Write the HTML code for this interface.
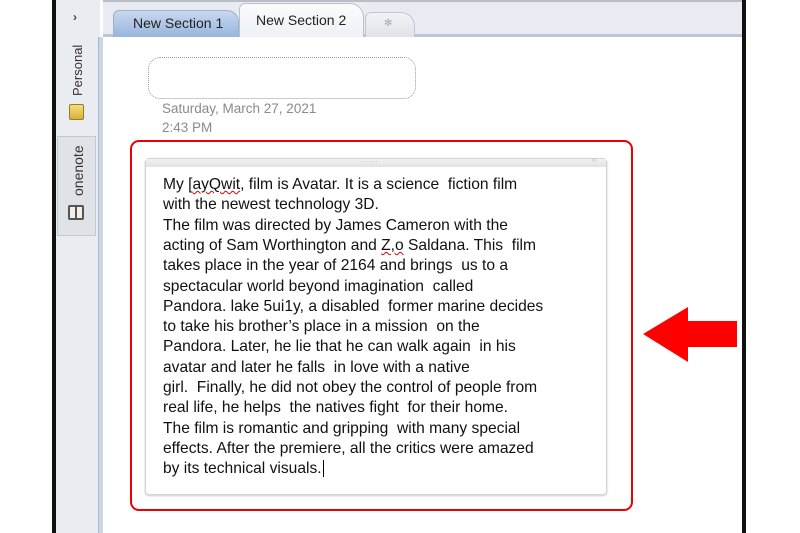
<!DOCTYPE html>
<html><head><meta charset="utf-8">
<style>
*{margin:0;padding:0;box-sizing:border-box}
body{width:800px;height:533px;background:#fff;position:relative;overflow:hidden;font-family:"Liberation Sans",sans-serif}
.abs{position:absolute}
.rot{position:absolute;transform:rotate(-90deg);transform-origin:left top;white-space:nowrap;font-size:13px;color:#333}
.ln{position:absolute;left:163px;font-size:15.6px;color:#111;white-space:nowrap;line-height:20px}
.sq{text-decoration:underline wavy #d00;text-decoration-thickness:1px}
</style></head><body>
<div class="abs" style="left:52px;top:0;width:4px;height:533px;background:#111"></div>
<div class="abs" style="left:742px;top:0;width:4px;height:533px;background:#111"></div>
<div class="abs" style="left:56px;top:0;width:44px;height:533px;background:#e9ecf0"></div>
<div class="abs" style="left:98px;top:37px;width:5px;height:496px;background:#c9d6e4;border-left:1px solid #aab9cc"></div>
<div class="abs" style="left:73px;top:10px;font-size:12px;color:#444;font-weight:bold">›</div>
<div class="rot" style="left:70px;top:96px">Personal</div>
<div class="abs" style="left:69px;top:104px;width:15px;height:16px;background:linear-gradient(#f5de7a,#d8b23a);border:1px solid #9a7b22;border-radius:2px"></div>
<div class="abs" style="left:57px;top:136px;width:39px;height:100px;background:#dfe3e8;border:1px solid #c3c9d1"></div>
<div class="rot" style="left:70px;top:196px;font-size:14px">onenote</div>
<div class="abs" style="left:68px;top:205px;width:16px;height:15px;border:2px solid #555;border-radius:2px;background:#f3efe4"></div>
<div class="abs" style="left:75px;top:205px;width:2px;height:15px;background:#555"></div>
<div class="abs" style="left:103px;top:0;width:639px;height:37px;background:#e8ebf1;border-top:2px solid #b9bec6;border-bottom:3px solid #b8c6d6"></div>
<div class="abs" style="left:113px;top:10px;width:126px;height:27px;background:linear-gradient(#c8d8ef,#98b5dd);border:1px solid #9fb1c9;border-bottom:none;border-radius:6px 12px 0 0;font-size:14px;color:#222;padding:4px 0 0 19px">New Section 1</div>
<div class="abs" style="left:365px;top:12px;width:50px;height:25px;background:linear-gradient(#f2f3f6,#dfe2e8);border:1px solid #c0c6cf;border-bottom:none;border-radius:6px 14px 0 0;font-size:10px;color:#aaa;padding:5px 0 0 18px">✻</div>
<div class="abs" style="left:239px;top:3px;width:125px;height:35px;background:linear-gradient(#fafbfc,#eef1f5);border:1px solid #b9c3cf;border-bottom:none;border-radius:6px 14px 0 0;font-size:14px;color:#222;padding:8px 0 0 16px">New Section 2</div>
<div class="abs" style="left:103px;top:37px;width:639px;height:496px;background:#fff"></div>
<div class="abs" style="left:148px;top:57px;width:268px;height:42px;border:1.5px dotted #999;border-radius:12px"></div>
<div class="abs" style="left:162px;top:99px;font-size:13.5px;color:#8a8a8a;line-height:19px">Saturday, March 27, 2021<br>2:43 PM</div>
<div class="abs" style="left:130px;top:140px;width:503px;height:371px;border:2.5px solid #e00;border-radius:9px"></div>
<div class="abs" style="left:145px;top:158px;width:462px;height:337px;border:1px solid #d4d4d4;border-radius:4px;box-shadow:0 1px 2px #ccc;background:#fff"></div>
<div class="abs" style="left:146px;top:159px;width:460px;height:8px;background:linear-gradient(#f2f2f2,#e2e2e2)"></div>
<div class="abs" style="left:361px;top:157px;font-size:7px;color:#aaa;letter-spacing:1px">......</div>
<div class="abs" style="left:592px;top:157px;font-size:7px;color:#aaa">‹›</div>
<div class="ln" style="top:175px">My [<span class="sq">ayQwit</span>, film is Avatar. It is a science&nbsp; fiction film</div>
<div class="ln" style="top:195px">with the newest technology 3D.</div>
<div class="ln" style="top:216px">The film was directed by James Cameron with the</div>
<div class="ln" style="top:236px">acting of Sam Worthington and <span class="sq">Z,o</span> Saldana. This&nbsp; film</div>
<div class="ln" style="top:256px">takes place in the year of 2164 and brings&nbsp; us to a</div>
<div class="ln" style="top:277px">spectacular world beyond imagination&nbsp; called</div>
<div class="ln" style="top:297px">Pandora. lake 5ui1y, a disabled&nbsp; former marine decides</div>
<div class="ln" style="top:317px">to take his brother’s place in a mission&nbsp; on the</div>
<div class="ln" style="top:337px">Pandora. Later, he lie that he can walk again&nbsp; in his</div>
<div class="ln" style="top:358px">avatar and later he falls&nbsp; in love with a native</div>
<div class="ln" style="top:378px">girl.&nbsp; Finally, he did not obey the control of people from</div>
<div class="ln" style="top:398px">real life, he helps&nbsp; the natives fight&nbsp; for their home.</div>
<div class="ln" style="top:419px">The film is romantic and gripping&nbsp; with many special</div>
<div class="ln" style="top:439px">effects. After the premiere, all the critics were amazed</div>
<div class="ln" style="top:459px">by its technical visuals.<span style="border-left:1px solid #000;margin-left:1px"></span></div>
<svg class="abs" style="left:0;top:0" width="800" height="533"><polygon points="643,334 688,307 688,321 737,321 737,347 688,347 688,362" fill="#f00"/></svg>
</body></html>
